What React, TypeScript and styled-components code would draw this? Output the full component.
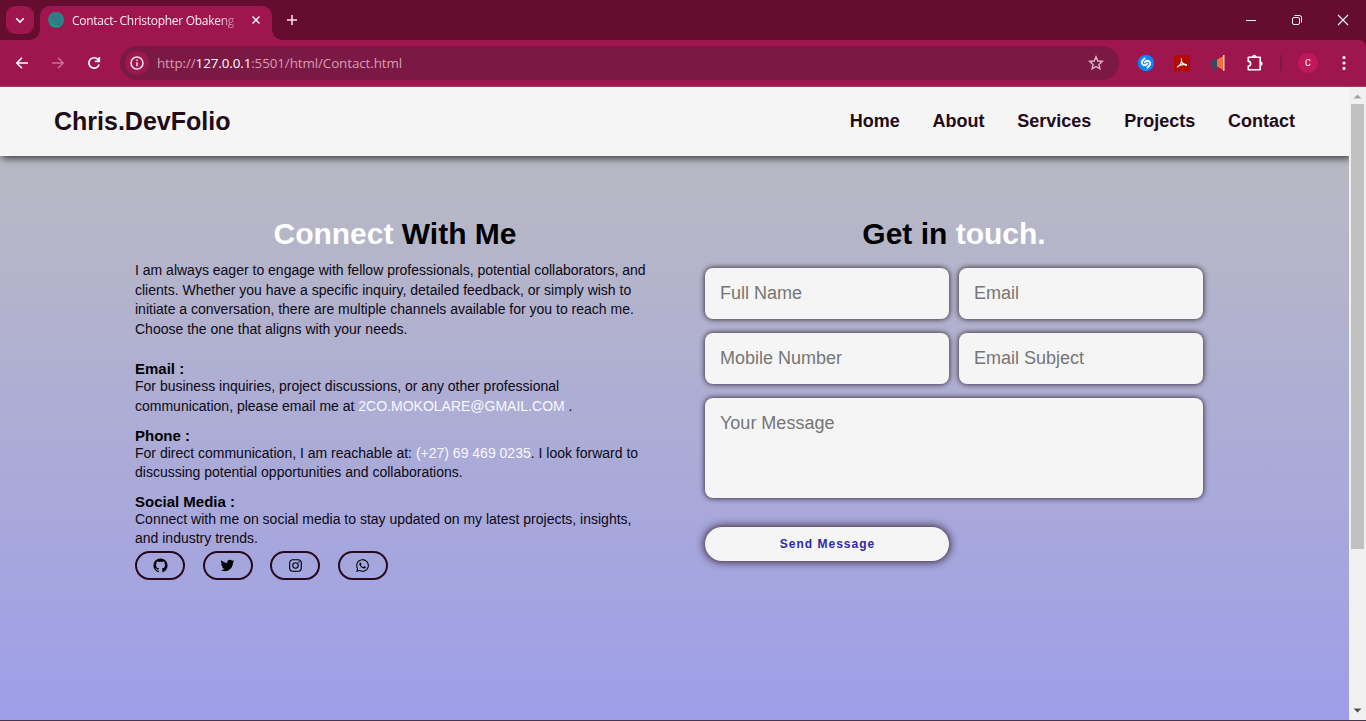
import React from "react";
import styled, { createGlobalStyle } from "styled-components";
import { BiLogoGithub, BiLogoTwitter, BiLogoInstagram, BiLogoWhatsapp } from "react-icons/bi";
import { SiShazam } from "react-icons/si";

const GlobalStyle = createGlobalStyle`
  *, *::before, *::after { box-sizing: border-box; }
  body {
    margin: 0;
    overflow: hidden;
    font-family: "Liberation Sans", Arial, sans-serif;
  }
  h1, h2, h3, p { margin: 0; }
`;

const Window = styled.div`
  width: 1366px;
  height: 721px;
  display: flex;
  flex-direction: column;
  overflow: hidden;
  background: #650d2e;
  border-bottom: 1px solid #46364a;
`;

/* ---------- browser chrome ---------- */

const TabStrip = styled.div`
  height: 40px;
  flex: none;
  display: flex;
  align-items: flex-start;
  padding-left: 6px;
  font-family: "Open Sans", "Noto Sans", sans-serif;
`;

const TabSearch = styled.div`
  width: 28px;
  height: 28px;
  margin: 6px 6px 0 0;
  border-radius: 9px;
  background: #9f164e;
  display: grid;
  place-items: center;
`;

const Tab = styled.div`
  position: relative;
  width: 232px;
  height: 34px;
  margin-top: 6px;
  padding: 0 10px 6px 8px;
  display: flex;
  align-items: center;
  border-radius: 10px 10px 0 0;
  background: #9f164e;
  &::before,
  &::after {
    content: "";
    position: absolute;
    bottom: 0;
    width: 10px;
    height: 10px;
  }
  &::before {
    left: -10px;
    background: radial-gradient(circle at 0 0, transparent 9.5px, #9f164e 10px);
  }
  &::after {
    right: -10px;
    background: radial-gradient(circle at 100% 0, transparent 9.5px, #9f164e 10px);
  }
`;

const TabTitle = styled.div`
  width: 166px;
  margin: 0 14px 0 8px;
  padding-top: 1px;
  overflow: hidden;
  white-space: nowrap;
  font-size: 12px;
  font-weight: 500;
  letter-spacing: -0.28px;
  color: #fdf0f5;
  mask-image: linear-gradient(to right, #000 145px, transparent 172px);
`;

const NewTab = styled.div`
  width: 20px;
  height: 40px;
  margin-left: 10px;
  display: grid;
  place-items: center;
`;

const WindowControls = styled.div`
  height: 40px;
  margin-left: auto;
  padding-right: 17px;
  display: flex;
  align-items: center;
  gap: 34px;
`;

const Toolbar = styled.div`
  height: 47px;
  flex: none;
  display: flex;
  align-items: center;
  padding: 0 14px;
  background: #9f164e;
  border-bottom: 1px solid #a13c62;
  border-top-right-radius: 7px;
  font-family: "Open Sans", "Noto Sans", sans-serif;
`;

const NavButtons = styled.div`
  display: flex;
  gap: 20px;
  margin-right: 18px;
`;

const AddressBar = styled.div`
  width: 999px;
  height: 34px;
  padding: 0 15px 0 5px;
  display: flex;
  align-items: center;
  border-radius: 17px;
  background: #7b1843;
`;

const InfoBadge = styled.div`
  width: 24px;
  height: 24px;
  margin-right: 8px;
  border-radius: 50%;
  display: grid;
  place-items: center;
  background: #9a1a50;
`;

const Url = styled.div`
  flex: 1;
  padding-bottom: 1px;
  font-size: 13.4px;
  letter-spacing: -0.1px;
  color: #d79db4;
  b {
    font-weight: 400;
    color: #ffffff;
  }
`;

const Extensions = styled.div`
  display: flex;
  align-items: center;
  gap: 20px;
  margin-left: 19px;
`;

const ShazamBadge = styled.div`
  width: 16px;
  height: 16px;
  border-radius: 50%;
  display: flex;
  background: radial-gradient(circle, #fff 6px, #0a84ff 6.5px);
  font-size: 16px;
  color: #0a84ff;
`;

const Divider = styled.div`
  width: 2px;
  height: 16px;
  margin-left: 16px;
  background: #7b1843;
`;

const Avatar = styled.div`
  width: 20px;
  height: 20px;
  margin: 0 24px 0 16px;
  border-radius: 50%;
  display: grid;
  place-items: center;
  background: #c2185b;
  color: #ffffff;
  font: 9px Roboto, sans-serif;
`;

const MenuDots = styled.svg`
  flex: none;
`;

/* ---------- web page ---------- */

const Viewport = styled.div`
  flex: 1;
  min-height: 0;
  display: flex;
`;

const Page = styled.div`
  width: 1349px;
  overflow: hidden;
  background: linear-gradient(#bdbdbf, #9393f8 855px);
`;

const Header = styled.header`
  height: 69px;
  padding: 0 54px;
  display: flex;
  align-items: center;
  justify-content: space-between;
  background: #f5f5f5;
  box-shadow: 2px 2px 8px rgba(0, 0, 0, 0.75);
`;

const Logo = styled.h1`
  font-size: 25px;
  line-height: 29px;
  color: #210b16;
`;

const Nav = styled.nav`
  display: flex;
  gap: 32.8px;
  padding-bottom: 2px;
  font-size: 18px;
  font-weight: 700;
  line-height: 20px;
  color: #210b16;
`;

const Columns = styled.main`
  display: flex;
  padding: 61px 0 0 135px;
`;

const ContactInfo = styled.section`
  width: 520px;
  margin-right: 49px;
`;

const Heading = styled.h2`
  font-size: 30px;
  line-height: 34px;
  text-align: center;
  color: #000;
  span { color: #fff; }
`;

const White = styled.span`
  color: #f8f8ff;
`;

const Text = styled.p<{ $leading?: number }>`
  font-size: 14px;
  line-height: ${(p) => p.$leading ?? 19.25}px;
  color: #0c0814;
`;

const Intro = styled(Text)`
  margin: 10px 0 21px;
`;

const Topic = styled.div`
  margin-bottom: 11px;
`;

const Label = styled.h3`
  font-size: 15px;
  line-height: 17px;
  color: #000;
`;

const Socials = styled.div`
  display: flex;
  gap: 17.6px;
  margin-top: -9px;
`;

const SocialButton = styled.a`
  width: 50px;
  height: 29px;
  border: 2px solid #260a1c;
  border-radius: 15px;
  display: grid;
  place-items: center;
  font-size: 17px;
  color: #000;
`;

const FormColumn = styled.section`
  width: 500px;
`;

const Form = styled.form`
  margin: 17px 0 0 1px;
  display: grid;
  grid-template-columns: 244px 244px;
  gap: 14px 10px;
`;

const Field = styled.input`
  height: 51px;
  padding: 0 15px;
  border: 0;
  border-radius: 8px;
  background: #f5f5f5;
  box-shadow: 0 0 5px 1px rgba(33, 11, 22, 0.7);
  font: 18px "Liberation Sans", Arial, sans-serif;
  &::placeholder { color: #757575; }
`;

const Message = styled.textarea`
  grid-column: 1 / -1;
  height: 100px;
  padding: 15px;
  border: 0;
  border-radius: 8px;
  resize: none;
  background: #f5f5f5;
  box-shadow: 0 0 5px 1px rgba(33, 11, 22, 0.7);
  font: 18px "Liberation Sans", Arial, sans-serif;
  &::placeholder { color: #757575; }
`;

const Send = styled.button`
  height: 34px;
  margin-top: 15px;
  padding: 0 0 0 1px;
  border: 0;
  border-radius: 17px;
  background: #f5f5f5;
  box-shadow: 0 0 9px 1px rgba(33, 11, 22, 0.85);
  font: bold 12px "Liberation Sans", Arial, sans-serif;
  letter-spacing: 1px;
  color: #2f2aa5;
`;

const Scrollbar = styled.div`
  width: 17px;
  display: flex;
  flex-direction: column;
  align-items: center;
  justify-content: space-between;
  padding: 7px 0 7px;
  background: #f1f1f1;
`;

const Thumb = styled.div`
  width: 13px;
  height: 445px;
  margin: 5px 0 auto;
  background: #c1c1c1;
`;

const Arrow = ({ down = false }: { down?: boolean }) => (
  <svg width="9" height="5" viewBox="0 0 9 5">
    <path d={down ? "M0.5 0.5h8l-4 4z" : "M0.5 4.5h8l-4-4z"} fill={down ? "#505050" : "#a3a3a3"} />
  </svg>
);

const links = ["Home", "About", "Services", "Projects", "Contact"];
const socials = [BiLogoGithub, BiLogoTwitter, BiLogoInstagram, BiLogoWhatsapp];

export default function App() {
  return (
    <Window>
      <GlobalStyle />
      <TabStrip>
        <TabSearch>
          <svg width="10" height="7" viewBox="0 0 10 7" fill="none" stroke="#fff" strokeWidth="1.6">
            <path d="M1.2 1.2 5 5l3.8-3.8" />
          </svg>
        </TabSearch>
        <Tab>
          <svg width="16" height="16" viewBox="0 0 16 16">
            <circle cx="8" cy="8" r="8" fill="#2a8288" />
            <path d="M3 6l2-2 2 2-1 2 3-1 1-3 2 2M9 10l3-1M8 12l4 1" fill="none" stroke="#4a6670" />
            <path d="M3 11q3 4 8 3" fill="none" stroke="#169a8c" strokeWidth="2" />
          </svg>
          <TabTitle>Contact- Christopher Obakeng</TabTitle>
          <svg width="8" height="8" viewBox="0 0 9 9" stroke="#fff" strokeWidth="1.5">
            <path d="M.6.6l7.8 7.8M8.4.6L.6 8.4" />
          </svg>
        </Tab>
        <NewTab>
          <svg width="10" height="10" viewBox="0 0 10 10" stroke="#fde6ef" strokeWidth="1.5">
            <path d="M5 0v10M0 5h10" />
          </svg>
        </NewTab>
        <WindowControls>
          <svg width="12" height="12" viewBox="0 0 12 12" stroke="#fff">
            <path d="M1 6.5h10" />
          </svg>
          <svg width="12" height="12" viewBox="0 0 12 12" fill="none" stroke="#fff">
            <rect x="1.5" y="3.5" width="7" height="7" rx="1.5" />
            <path d="M3.5 1.5h5q2 0 2 2v5" />
          </svg>
          <svg width="12" height="12" viewBox="0 0 12 12" stroke="#fff" strokeWidth="1.1">
            <path d="M1 1l10 10M11 1L1 11" />
          </svg>
        </WindowControls>
      </TabStrip>

      <Toolbar>
        <NavButtons>
          <svg width="16" height="16" viewBox="0 0 16 16" fill="none" stroke="#fff" strokeWidth="1.6">
            <path d="M14 8H3.2M8 2.800L2.800 8 8 13.2" />
          </svg>
          <svg width="16" height="16" viewBox="0 0 16 16" fill="none" stroke="#cb6c92" strokeWidth="1.6">
            <path d="M2 8h10.8M8 2.8L13.2 8 8 13.2" />
          </svg>
          <svg width="16" height="16" viewBox="0 0 16 16" fill="none" stroke="#fff" strokeWidth="1.7">
            <path d="M13.1 9.4A5.2 5.2 0 1 1 11.9 4.4L13.3 5.8M13.3 2v4.4H8.9" />
          </svg>
        </NavButtons>
        <AddressBar>
          <InfoBadge>
            <svg width="14" height="14" viewBox="0 0 14 14" fill="none" stroke="#fbe3ec" strokeWidth="1.5">
              <circle cx="7" cy="7" r="6" />
              <path d="M7 6.2v4M7 3.6v1.5" />
            </svg>
          </InfoBadge>
          <Url>
            http://<b>127.0.0.1</b>:5501/html/Contact.html
          </Url>
          <svg width="16" height="16" viewBox="0 0 16 16" fill="none" stroke="#dcb9c8" strokeWidth="1.4">
            <path d="M8 1.8l1.8 4.2 4.500.4-3.400 3 1 4.500L8 11.500l-3.900 2.400 1-4.500-3.400-3 4.500-.4z" />
          </svg>
        </AddressBar>
        <Extensions>
          <ShazamBadge>
            <SiShazam />
          </ShazamBadge>
          <svg width="16" height="16" viewBox="0 0 16 16">
            <rect width="16" height="16" rx="1.5" fill="#b30b00" />
            <path
              d="M7.4 3.6c.3 1.9.3 3.2-.4 4.700-.8 1.700-2.200 3.100-3.600 3.700M3.700 11.400c2.300-1.400 5.200-2.300 8.800-1.900M7.500 6.500c.7 1.800 2.400 3.200 4.900 4"
              fill="none"
              stroke="#fff"
              strokeWidth="1.1"
              strokeLinecap="round"
            />
          </svg>
          <svg width="16" height="16" viewBox="0 0 16 16">
            <path d="M2.500 4.500H8v7H6.800l-.8 4.500H4l-1.500-4.500L.5 9.500v-3z" fill="#39485a" />
            <path d="M7 4.500L13.5 1v14L7 11.500z" fill="#f2703f" />
            <rect x="13" y="0" width="1.500" height="16" fill="#f8cfc0" />
          </svg>
          <svg width="18" height="18" viewBox="0 0 18 18" fill="none" stroke="#fff" strokeWidth="1.6" strokeLinejoin="round">
            <path d="M2.300 3.300H14.200V15.700H2.300V12a2.300 2.300 0 0 0 0-4.600z" />
            <path d="M6.300 2.800a2 1.700 0 0 1 4 0zM14.800 7.800a1.500 1.800 0 0 1 0 3.700z" fill="#fff" strokeWidth="0.6" />
          </svg>
        </Extensions>
        <Divider />
        <Avatar>C</Avatar>
        <MenuDots width="4" height="16" viewBox="0 0 4 16" fill="#fff">
          <circle cx="2" cy="2.600" r="1.6" />
          <circle cx="2" cy="8" r="1.6" />
          <circle cx="2" cy="13.400" r="1.6" />
        </MenuDots>
      </Toolbar>

      <Viewport>
        <Page>
          <Header>
            <Logo>Chris.DevFolio</Logo>
            <Nav>
              {links.map((l) => (
                <span key={l}>{l}</span>
              ))}
            </Nav>
          </Header>
          <Columns>
            <ContactInfo>
              <Heading>
                <span>Connect</span> With Me
              </Heading>
              <Intro $leading={19.5}>
                I am always eager to engage with fellow professionals, potential collaborators, and clients. Whether you
                have a specific inquiry, detailed feedback, or simply wish to initiate a conversation, there are multiple
                channels available for you to reach me. Choose the one that aligns with your needs.
              </Intro>
              <Topic>
                <Label>Email :</Label>
                <Text $leading={19.5}>
                  For business inquiries, project discussions, or any other professional
                  <br />
                  communication, please email me at <White>2CO.MOKOLARE@GMAIL.COM</White> .
                </Text>
              </Topic>
              <Topic>
                <Label>Phone :</Label>
                <Text $leading={19}>
                  For direct communication, I am reachable at: <White>(+27) 69 469 0235</White>. I look forward to
                  <br />
                  discussing potential opportunities and collaborations.
                </Text>
              </Topic>
              <Topic>
                <Label>Social Media :</Label>
                <Text>
                  Connect with me on social media to stay updated on my latest projects, insights, and industry trends.
                </Text>
              </Topic>
              <Socials>
                {socials.map((Icon, i) => (
                  <SocialButton key={i}>
                    <Icon />
                  </SocialButton>
                ))}
              </Socials>
            </ContactInfo>
            <FormColumn>
              <Heading>
                Get in <span>touch.</span>
              </Heading>
              <Form>
                <Field placeholder="Full Name" />
                <Field placeholder="Email" />
                <Field placeholder="Mobile Number" />
                <Field placeholder="Email Subject" />
                <Message placeholder="Your Message" />
                <Send type="button">Send Message</Send>
              </Form>
            </FormColumn>
          </Columns>
        </Page>
        <Scrollbar>
          <Arrow />
          <Thumb />
          <Arrow down />
        </Scrollbar>
      </Viewport>
    </Window>
  );
}
